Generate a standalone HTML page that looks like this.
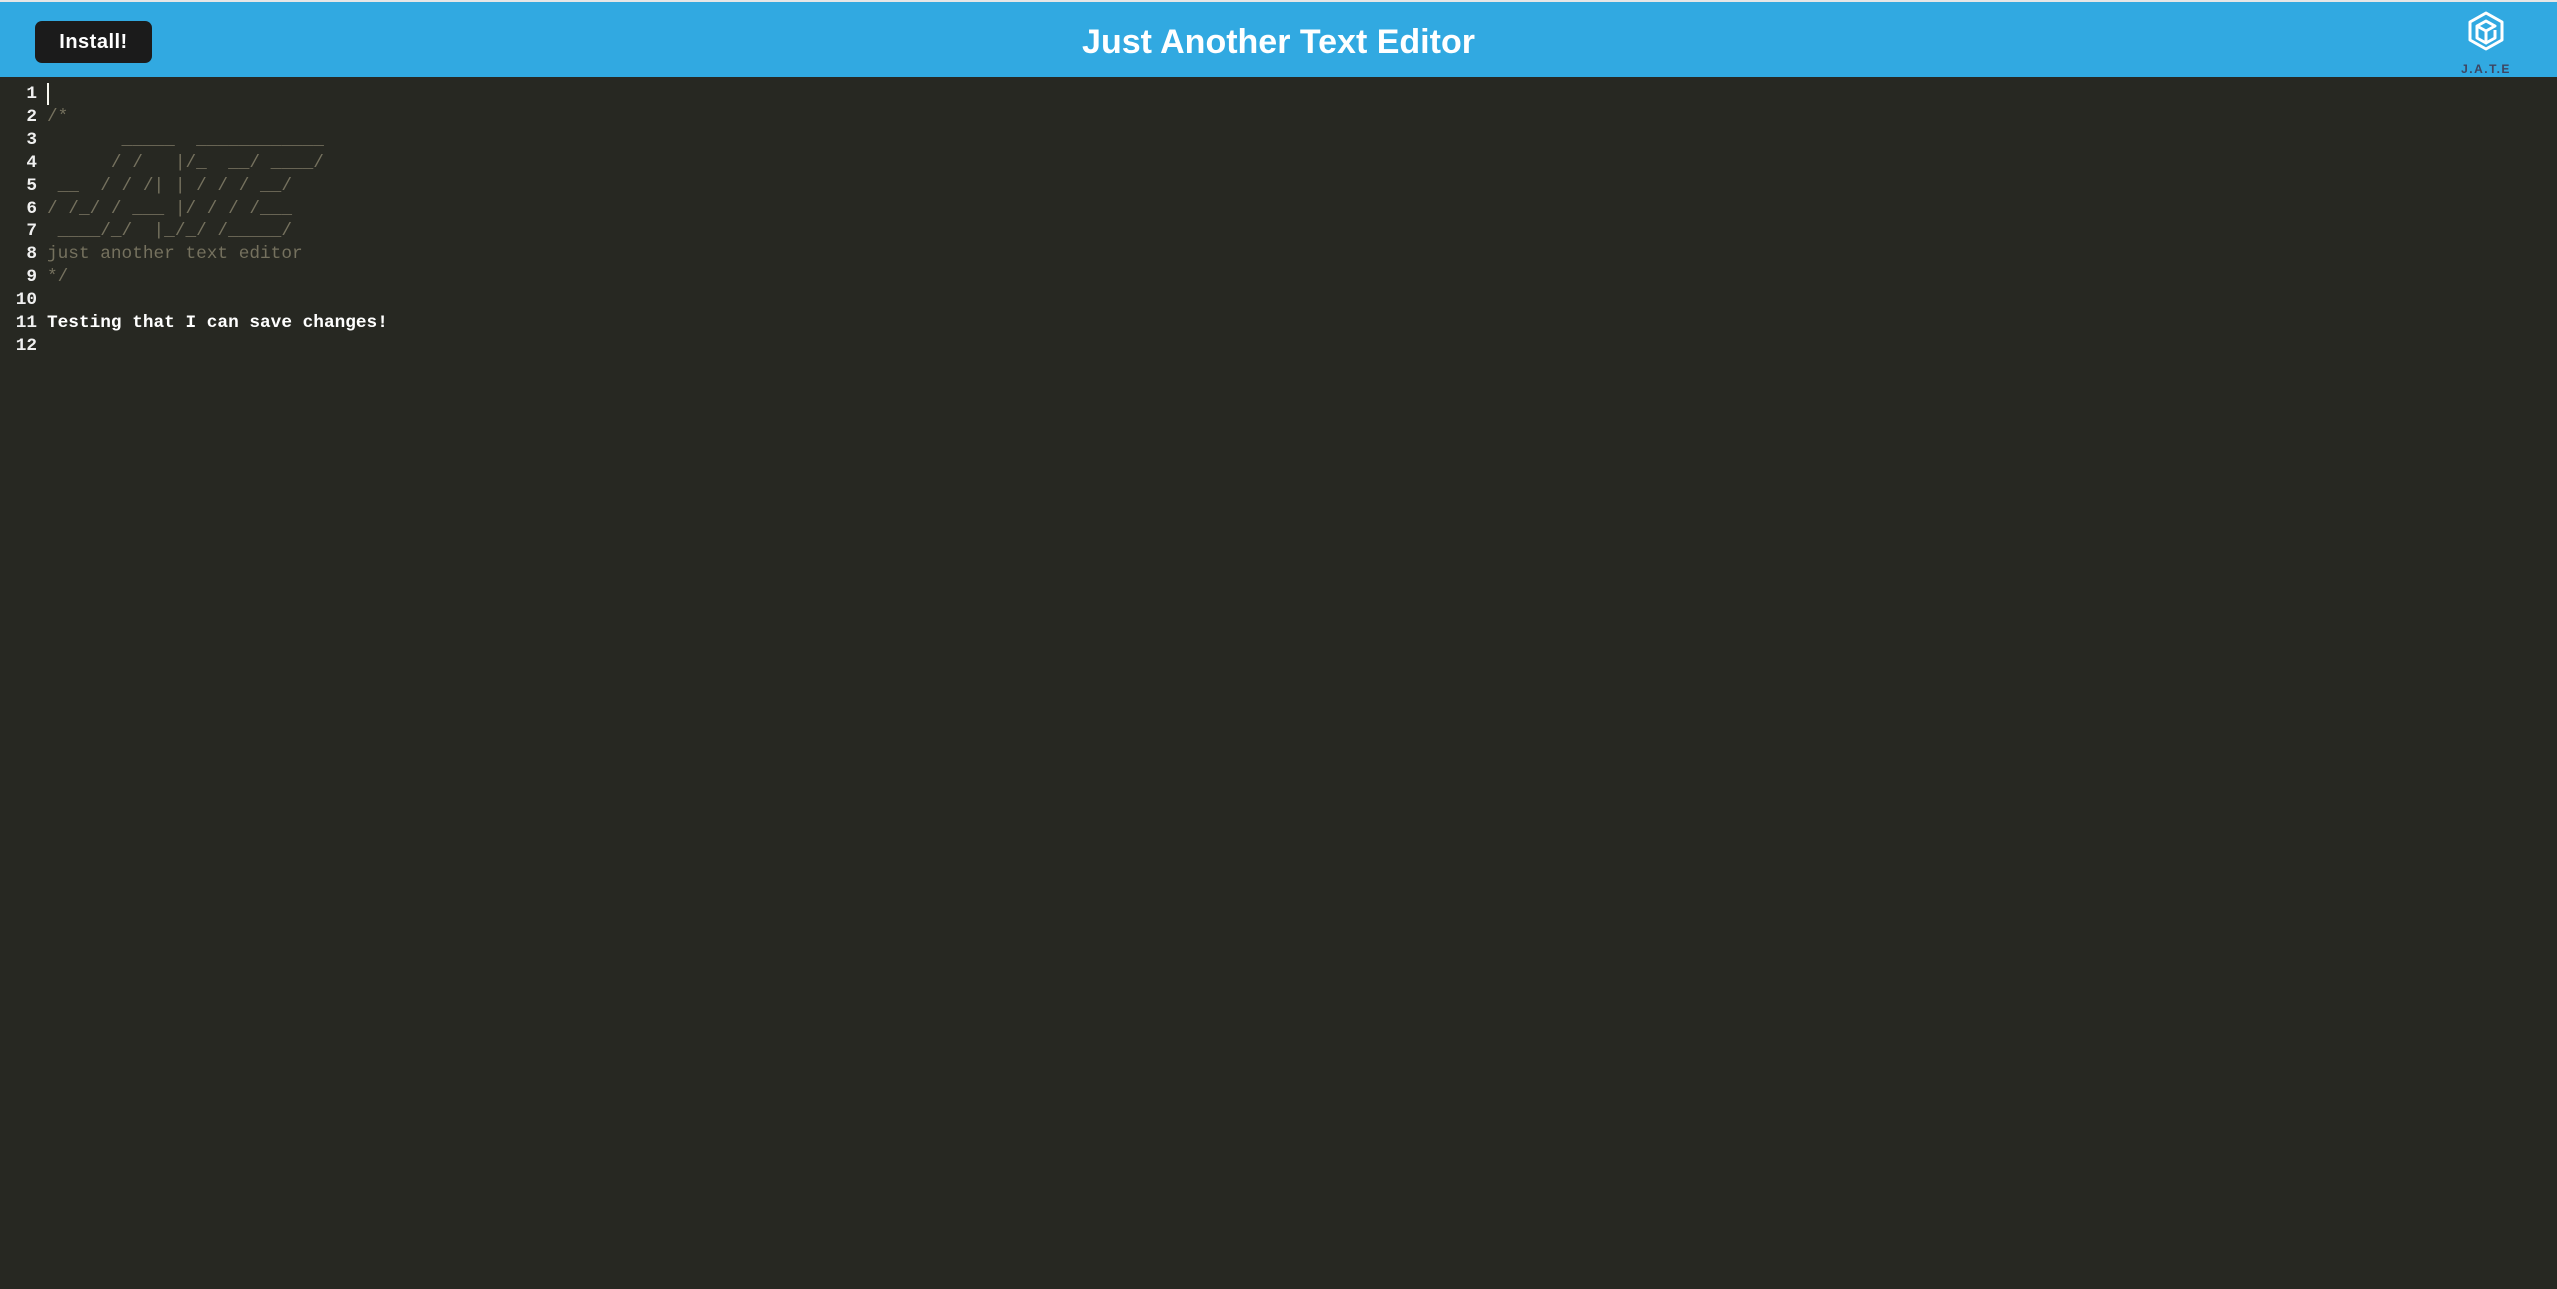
<!DOCTYPE html>
<html><head><meta charset="utf-8"><style>
html,body{margin:0;padding:0;width:2557px;height:1289px;overflow:hidden;background:#272822;}
.top{position:absolute;left:0;top:0;width:2557px;height:2px;background:#e6e6e6;}
header{position:absolute;left:0;top:2px;width:2557px;height:75px;background:#31a9e1;}
.btn{position:absolute;left:35px;top:19px;width:117px;height:42px;background:#1b1b1b;border-radius:7px;color:#fff;font:bold 20px "Liberation Sans",sans-serif;text-align:center;line-height:42px;letter-spacing:0.5px;}
h1{position:absolute;left:0;width:2557px;top:0;margin:0;text-align:center;color:#fff;font:bold 34px "Liberation Sans",sans-serif;line-height:80px;}
.logo{position:absolute;left:2455px;top:6px;width:62px;height:70px;}
.logo span{position:absolute;left:0;width:62px;top:54px;text-align:center;font:bold 12px "Liberation Sans",sans-serif;color:#3e4561;letter-spacing:1.5px;}
.g,.c{position:absolute;top:83px;font:17.75px/22.9px "Liberation Mono",monospace;white-space:pre;margin:0;}
.g{left:0;width:37px;text-align:right;color:#f0f0f0;font-weight:bold;}
.c{left:47px;}
.cm{color:#75715e;}.w{color:#fff;font-weight:bold;}
.cur{position:absolute;left:47px;top:83px;width:2px;height:22px;background:#f8f8f0;}
</style></head><body>
<div class="top"></div>
<header>
<div class="btn">Install!</div>
<h1>Just Another Text Editor</h1>
<div class="logo">
<svg width="62" height="52" viewBox="0 0 62 52"><g fill="none" stroke="#fff" stroke-width="3" stroke-linejoin="round">
<path d="M31 5 L47 14 L47 32 L31 41 L15 32 L15 14 Z"/>
<path d="M22 18 L31 13 L40 18 L31 23 Z M22 18 L22 30 L31 35 L31 23 M40 22 L40 30 L31 35"/>
</g></svg>
<span>J.A.T.E</span>
</div>
</header>
<div class="g">1
2
3
4
5
6
7
8
9
10
11
12</div><div class="cur"></div><div class="c"> 
<span class="cm">/*
       _____  ____________
      / /   |/_  __/ ____/
 __  / / /| | / / / __/
/ /_/ / ___ |/ / / /___
 ____/_/  |_/_/ /_____/
just another text editor
*/</span>

<span class="w">Testing that I can save changes!</span></div>
</body></html>
